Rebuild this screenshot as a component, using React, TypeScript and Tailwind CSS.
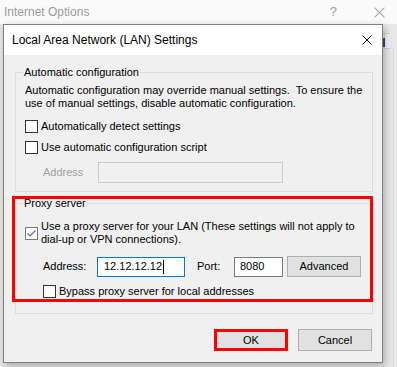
import * as React from "react"

function CloseGlyph({ color, size = 10 }: { color: string; size?: number }) {
  return (
    <svg width={size} height={size} viewBox="0 0 10 10" className="block">
      <path d="M0.5 0.5 L9.5 9.5 M9.5 0.5 L0.5 9.5" stroke={color} strokeWidth="1" fill="none" />
    </svg>
  )
}

function CheckBox({ checked = false }: { checked?: boolean }) {
  return (
    <span
      className={
        checked
          ? "flex h-[13px] w-[13px] shrink-0 items-center justify-center border border-[#7a7a7a] bg-white"
          : "flex h-[13px] w-[13px] shrink-0 items-center justify-center border border-[#333333] bg-white"
      }
    >
      {checked && (
        <svg width="11" height="11" viewBox="0 0 11 11" className="block">
          <path d="M1.5 5.5 L4 8 L9.5 2.5" stroke="#6d6d6d" strokeWidth="1.2" fill="none" />
        </svg>
      )}
    </span>
  )
}

export default function App() {
  return (
    <div className="relative h-[367px] w-[397px] overflow-hidden bg-[#e9e9e9] font-['Liberation_Sans',Arial,sans-serif] text-[11px] text-black">
      {/* Parent window (Internet Options) behind the dialog */}
      <div className="flex h-[24px] items-center bg-[#fafafa] pl-[4px] pr-[12px] text-[#9b9b9b]">
        <span className="text-[12px] leading-[16px]">Internet Options</span>
        <span className="ml-auto mr-[37px] text-[13px] leading-[16px]">?</span>
        <CloseGlyph color="#a8a8a8" size={11} />
      </div>
      <div className="absolute left-[384px] top-[33px] h-[16px] w-[6px] border border-r-0 border-[#d4d4d4] bg-[#f4f4f4]" />
      <div className="absolute left-[383px] top-[38px] h-[9px] w-[2px] bg-[#1f4f8f]" />
      <div className="absolute left-[393px] top-[48px] h-[320px] w-px bg-[#d6d6d6]" />

      {/* Dialog window */}
      <div className="absolute left-[3px] top-[24px] flex h-[339px] w-[380px] flex-col border border-[#7f7f7f] bg-[#f0f0f0] shadow-[2px_3px_8px_rgba(0,0,0,0.28)]">
        <div className="flex h-[30px] shrink-0 items-center bg-white pl-[8px] pr-[10px]">
          <span className="text-[12px] leading-[16px]">Local Area Network (LAN) Settings</span>
          <span className="ml-auto">
            <CloseGlyph color="#000000" />
          </span>
        </div>

        <div className="flex flex-col pl-[11px] pr-[9px] pt-[9px]">
          {/* Automatic configuration */}
          <fieldset className="border border-[#dcdcdc] pb-[8px] pl-[9px] pr-[8px]">
            <legend className="-ml-[2px] px-[1px] leading-[16px]">Automatic configuration</legend>
            <p className="mt-[4px] whitespace-pre leading-[13px]">
              {"Automatic configuration may override manual settings.  To ensure the\nuse of manual settings, disable automatic configuration."}
            </p>
            <label className="mt-[8px] flex h-[16px] items-center gap-[3px]">
              <CheckBox />
              <span>Automatically detect settings</span>
            </label>
            <label className="mt-[5px] flex h-[16px] items-center gap-[3px]">
              <CheckBox />
              <span>Use automatic configuration script</span>
            </label>
            <div className="mt-[7px] flex h-[21px] items-center">
              <span className="w-[73px] pl-[18px] text-[#a0a0a0]">Address</span>
              <div className="h-[21px] w-[185px] border border-[#cccccc] bg-[#f0f0f0]" />
            </div>
          </fieldset>

          {/* Proxy server */}
          <div className="relative mt-[3px]">
            <fieldset className="border border-[#dcdcdc] pb-[14px] pl-[9px] pr-[8px]">
              <legend className="-ml-[2px] px-[1px] leading-[16px]">Proxy server</legend>
              <label className="mt-[9px] flex items-center gap-[3px]">
                <CheckBox checked />
                <span className="whitespace-pre leading-[13px]">
                  {"Use a proxy server for your LAN (These settings will not apply to\ndial-up or VPN connections)."}
                </span>
              </label>
              <div className="mt-[10px] flex h-[21px] items-center">
                <span className="w-[72px] pl-[18px]">Address:</span>
                <div className="flex h-[20px] w-[88px] items-center border border-[#0078d7] bg-white pl-[6px]">
                  <span>12.12.12.12</span>
                  <span className="ml-[1px] h-[14px] w-px bg-black" />
                </div>
                <span className="ml-[12px] w-[37px]">Port:</span>
                <div className="flex h-[20px] w-[49px] items-center border border-[#7a7a7a] bg-white pl-[5px]">
                  8080
                </div>
                <button className="ml-[4px] flex h-[21px] w-[74px] items-center justify-center border border-[#adadad] bg-[#e1e1e1]">
                  Advanced
                </button>
              </div>
              <label className="mt-[6px] flex h-[16px] items-center gap-[3px] pl-[18px]">
                <CheckBox />
                <span>Bypass proxy server for local addresses</span>
              </label>
            </fieldset>
            {/* red highlight */}
            <div className="pointer-events-none absolute -left-[3px] top-[1px] h-[106px] w-[361px] border-[3px] border-[#ff0000]" />
          </div>

          <div className="mt-[15px] flex justify-end gap-[10px] pr-[1px]">
            <button className="flex h-[22px] w-[74px] items-center justify-center border-[3px] border-[#ff0000] bg-[#e1e1e1]">
              OK
            </button>
            <button className="flex h-[22px] w-[74px] items-center justify-center border border-[#adadad] bg-[#e1e1e1]">
              Cancel
            </button>
          </div>
        </div>
      </div>
    </div>
  )
}
